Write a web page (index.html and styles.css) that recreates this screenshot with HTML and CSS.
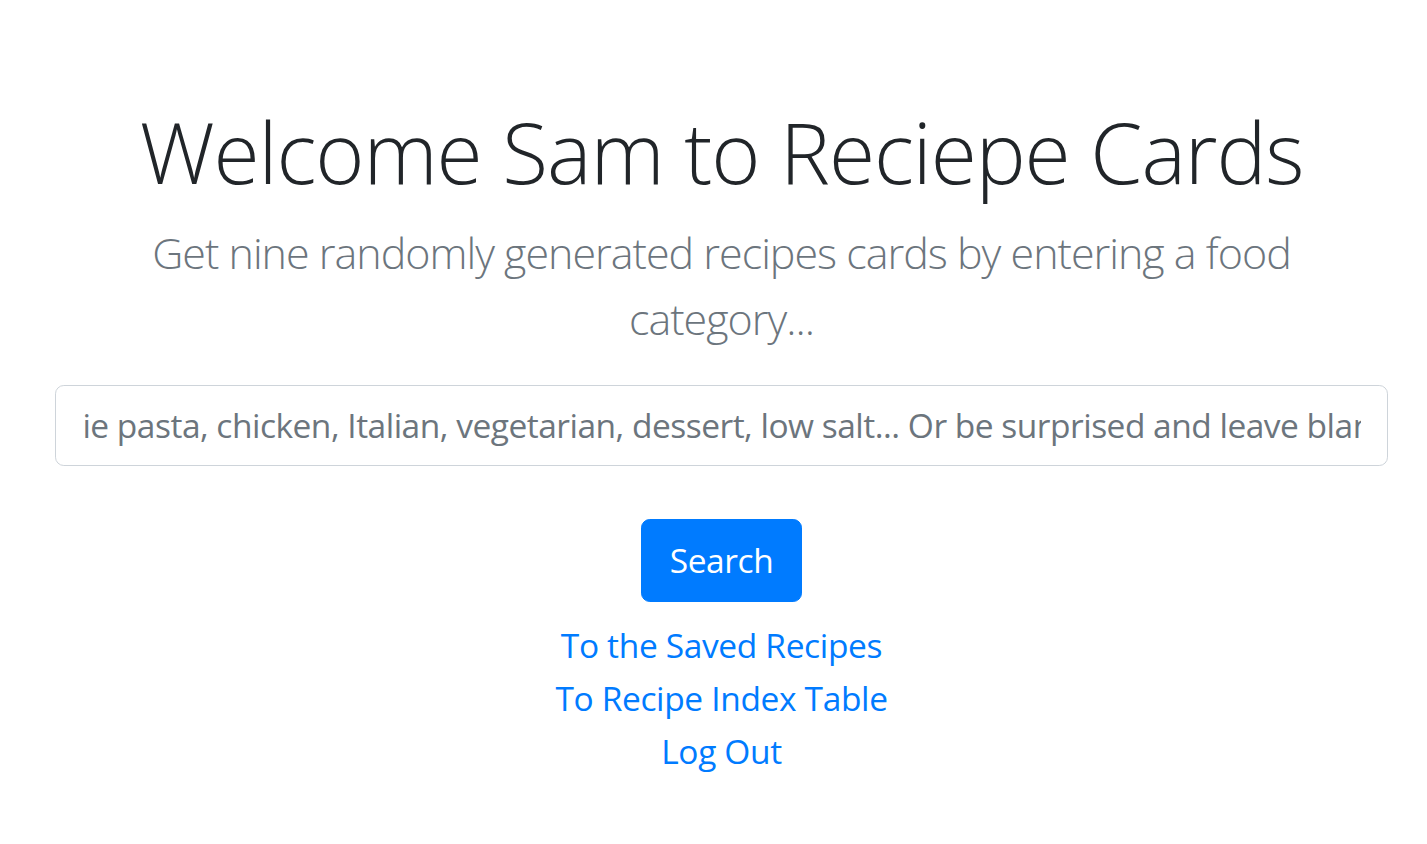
FILE: index.html
```html
<!DOCTYPE html>
<html lang="en">
<head>
<meta charset="utf-8">
<title>Reciepe Cards</title>
<link rel="stylesheet" href="styles.css">
</head>
<body>
<main class="page">
  <h1 class="title">Welcome Sam to Reciepe Cards</h1>
  <p class="lead">Get nine randomly generated recipes cards by entering a food category...</p>
  <form class="search">
    <input class="field" type="text" placeholder="ie pasta, chicken, Italian, vegetarian, dessert, low salt... Or be surprised and leave blank">
    <button class="btn" type="button">Search</button>
  </form>
  <nav class="links">
    <a href="#">To the Saved Recipes</a>
    <a href="#">To Recipe Index Table</a>
    <a href="#">Log Out</a>
  </nav>
</main>
</body>
</html>
```
FILE: styles.css
```css
* { box-sizing: border-box; }
html, body { margin: 0; background: #fff; }
body {
  font-family: "Open Sans", "Noto Sans", sans-serif;
  color: #212529;
  font-size: 33.5px;
  letter-spacing: -0.35px;
  line-height: 1.5;
}
.page {
  padding: 99px 39px 0 55px;
  text-align: center;
}
.title {
  margin: 0 0 15px;
  font-size: 84px;
  font-weight: 300;
  letter-spacing: -1.1px;
  line-height: 105.6px;
}
.lead {
  margin: 0;
  padding: 0 40px;
  font-size: 43px;
  font-weight: 300;
  letter-spacing: -1px;
  line-height: 66px;
  color: #6c757d;
}
.search {
  margin-top: 33px;
  display: flex;
  flex-direction: column;
  align-items: center;
}
.field {
  width: 100%;
  height: 81px;
  padding: 8px 26.4px;
  font: inherit;
  font-size: 33.5px;
  letter-spacing: -0.5px;
  color: #495057;
  border: 1px solid #ced4da;
  border-radius: 8.8px;
  background: #fff;
  outline: none;
}
.field::placeholder { color: #6c757d; opacity: 1; }
.btn {
  margin-top: 53px;
  padding: 14.5px 28px;
  font: inherit;
  font-size: 33.5px;
  letter-spacing: -0.4px;
  line-height: 52.8px;
  color: #fff;
  background: #007bff;
  border: 1px solid #007bff;
  border-radius: 8.8px;
}
.links {
  margin-top: 17px;
  display: flex;
  flex-direction: column;
  align-items: center;
}
.links a {
  color: #007bff;
  text-decoration: none;
  line-height: 52.8px;
}
```
